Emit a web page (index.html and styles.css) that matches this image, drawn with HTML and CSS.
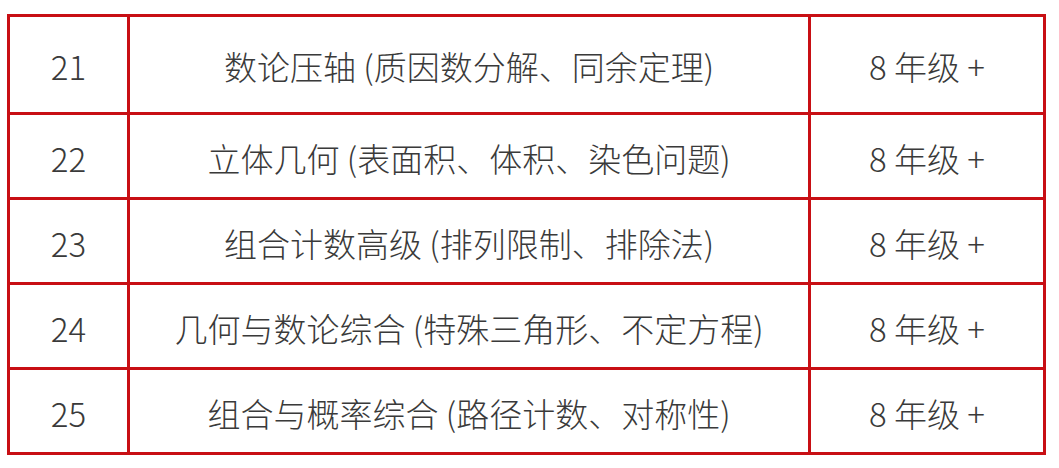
FILE: index.html
```html
<!DOCTYPE html>
<html lang="zh">
<head>
<meta charset="utf-8">
<link rel="stylesheet" href="styles.css">
</head>
<body>
<div class="table">
  <div class="cell num">21</div><div class="cell topic">数论压轴 (质因数分解、同余定理)</div><div class="cell grade">8 年级 +</div>
  <div class="cell num">22</div><div class="cell topic">立体几何 (表面积、体积、染色问题)</div><div class="cell grade">8 年级 +</div>
  <div class="cell num">23</div><div class="cell topic">组合计数高级 (排列限制、排除法)</div><div class="cell grade">8 年级 +</div>
  <div class="cell num">24</div><div class="cell topic">几何与数论综合 (特殊三角形、不定方程)</div><div class="cell grade">8 年级 +</div>
  <div class="cell num">25</div><div class="cell topic">组合与概率综合 (路径计数、对称性)</div><div class="cell grade">8 年级 +</div>
</div>
</body>
</html>
```
FILE: styles.css
```css
html, body {
  margin: 0;
  padding: 0;
  background: #ffffff;
}
body {
  padding: 14px 0 0 7px;
  font-family: "Noto Sans CJK SC", "Noto Sans", sans-serif;
  color: #3a3a3a;
}
.table {
  display: grid;
  width: 1039px;
  box-sizing: border-box;
  grid-template-columns: 117px 678px 232px;
  grid-template-rows: 95px 82px 82px 82px 82px;
  gap: 3px;
  padding: 3px;
  background: #c80f14;
}
.cell {
  background: #ffffff;
  display: flex;
  align-items: center;
  justify-content: center;
  font-size: 33px;
  font-weight: 300;
  line-height: 1;
  padding-top: 4px;
  box-sizing: border-box;
}
```
